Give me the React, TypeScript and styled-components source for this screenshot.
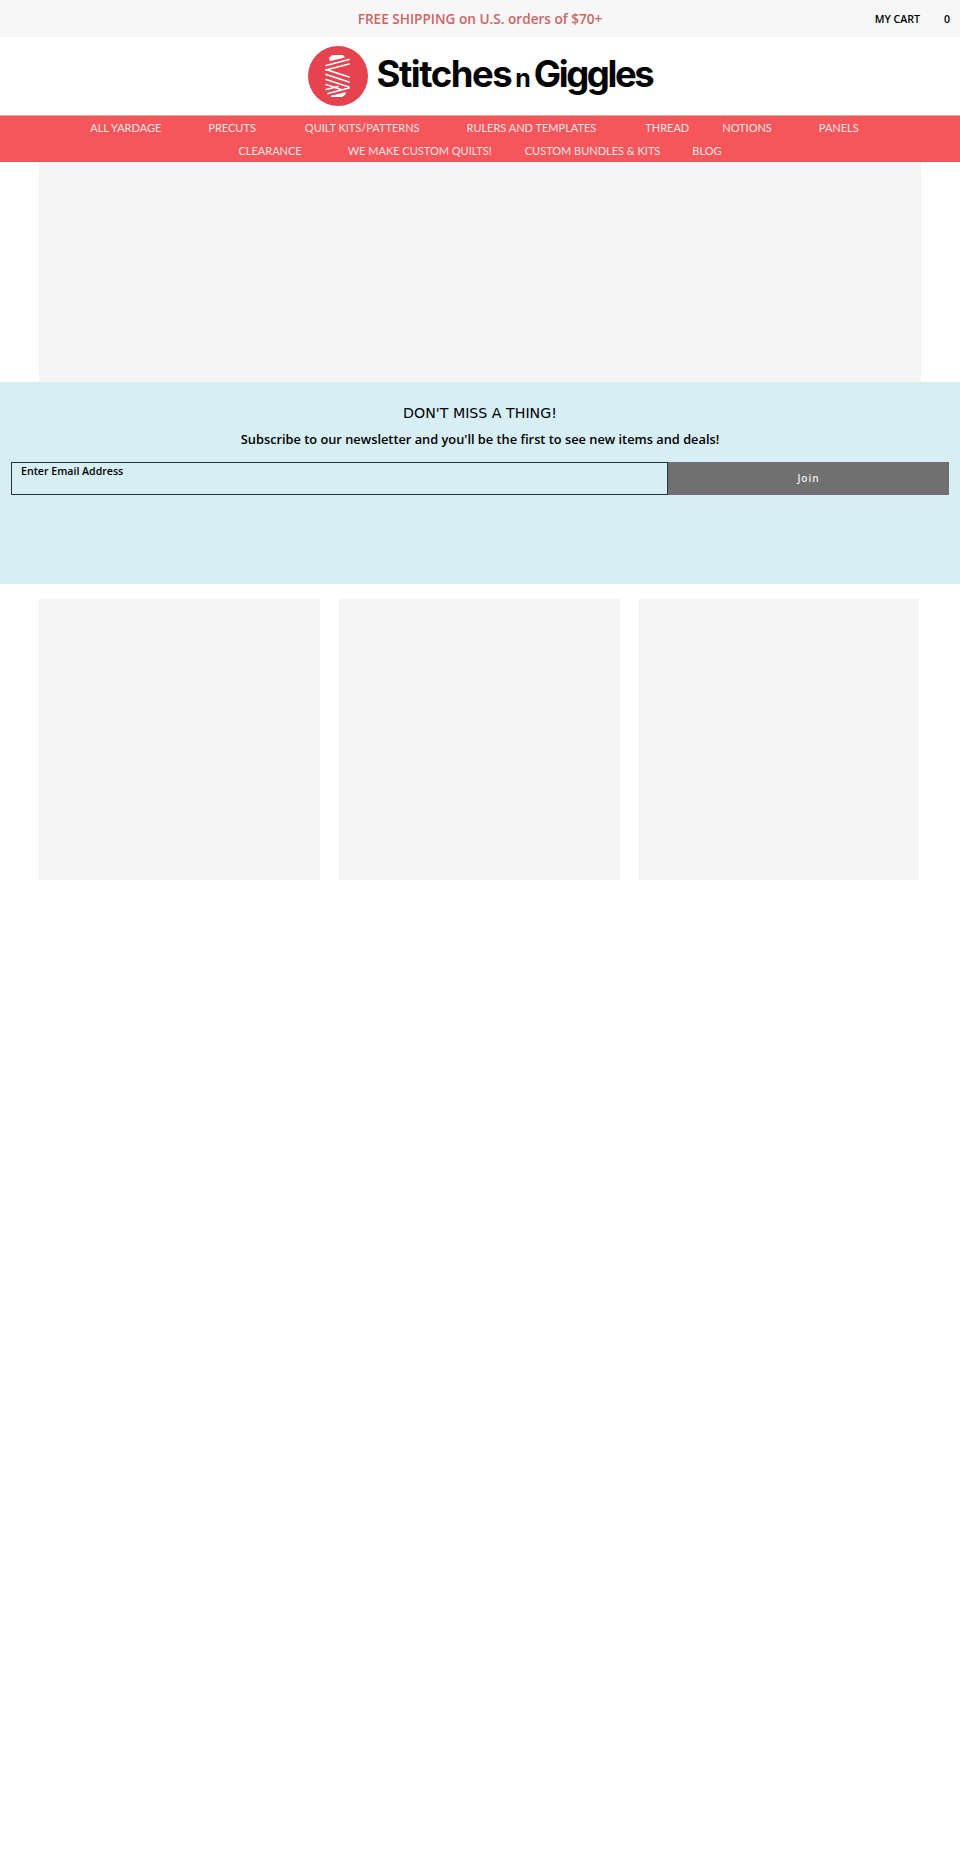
import React from 'react';
import styled, { createGlobalStyle } from 'styled-components';

const GlobalStyle = createGlobalStyle`
    html, body {
        margin: 0;
        padding: 0;
        background: #fff;
    }
    body {
        font-family: 'Open Sans', sans-serif;
        color: #000;
    }
`;

const Page = styled.div`
    min-height: 1875px;
    display: flex;
    flex-direction: column;
`;
const TopBar = styled.div`
    position: relative;
    height: 37px;
    background: #f7f7f7;
    display: flex;
    align-items: center;
    justify-content: center;
`;
const Promo = styled.div`
    font-size: 13.6px;
    font-weight: 600;
    color: #cd6466;
    margin-bottom: 1px;
`;
const Cart = styled.div`
    position: absolute;
    top: 11px;
    right: 10px;
    display: flex;
    gap: 24px;
    font-size: 10.6px;
    font-weight: 600;
    line-height: 17px;
`;
const LogoRow = styled.div`
    height: 78px;
    display: flex;
    align-items: center;
    justify-content: center;
    gap: 9px;
`;
const Wordmark = styled.div`
    display: flex;
    align-items: baseline;
    font-family: Inter, sans-serif;
    font-weight: 700;
    font-size: 36.5px;
    line-height: 50px;
    color: #050505;
`;
const WordPart = styled.span<{ $spacing: number }>`
    letter-spacing: ${(p) => p.$spacing}px;
`;
const WordmarkSmall = styled.span`
    font-size: 25px;
    font-weight: 700;
    margin: 0 3px 0 4px;
`;
const Nav = styled.nav`
    height: 46px;
    background: #f4565b;
    border-top: 1px solid #e9a4a6;
    display: flex;
    flex-direction: column;
`;
const NavRow = styled.div`
    height: 23px;
    display: flex;
    justify-content: center;
    align-items: center;
`;
const NavItem = styled.a<{ $after?: number }>`
    font-family: Lato, sans-serif;
    font-size: 11px;
    color: #fbe3e3;
    white-space: nowrap;
    margin-right: ${(p) => p.$after ?? 0}px;
`;
const Hero = styled.div`
    height: 220px;
    margin: 0 39px;
    background: #f5f5f5;
`;
const Newsletter = styled.section`
    height: 202px;
    box-sizing: border-box;
    padding: 21px 11px 0;
    background: #d7eef5;
    display: flex;
    flex-direction: column;
    align-items: stretch;
`;
const Heading = styled.h2`
    margin: 0;
    font-family: 'DejaVu Sans', sans-serif;
    font-size: 14.2px;
    font-weight: 400;
    line-height: 20px;
    text-align: center;
`;
const Subheading = styled.p`
    margin: 6px 0 0;
    font-size: 12.8px;
    font-weight: 600;
    line-height: 20px;
    text-align: center;
`;
const Form = styled.div`
    margin-top: 13px;
    display: flex;
    height: 33px;
`;
const EmailField = styled.div`
    flex: 0 0 657px;
    box-sizing: border-box;
    border: 1px solid #26343c;
    padding: 0 9px;
    font-size: 10.6px;
    font-weight: 600;
    line-height: 17px;
`;
const JoinButton = styled.button`
    flex: 0 0 281px;
    border: 0;
    background: #707070;
    color: #eee;
    font-family: 'Open Sans', sans-serif;
    font-size: 10px;
    font-weight: 600;
    letter-spacing: 1px;
    padding: 0 0 2px;
`;
const Cards = styled.div`
    margin-top: 15px;
    padding: 0 39px;
    display: grid;
    grid-template-columns: repeat(3, 281px);
    column-gap: 18.5px;
`;
const Card = styled.div`
    height: 281px;
    background: #f5f5f5;
`;

const navRows = [
    [
        { label: 'ALL YARDAGE', after: 47 },
        { label: 'PRECUTS', after: 49 },
        { label: 'QUILT KITS/PATTERNS', after: 47 },
        { label: 'RULERS AND TEMPLATES', after: 49 },
        { label: 'THREAD', after: 33 },
        { label: 'NOTIONS', after: 47 },
        { label: 'PANELS', after: 11 },
    ],
    [
        { label: 'CLEARANCE', after: 46 },
        { label: 'WE MAKE CUSTOM QUILTS!', after: 33 },
        { label: 'CUSTOM BUNDLES & KITS', after: 32 },
        { label: 'BLOG', after: 0 },
    ],
];

const SpoolLogo = () => (
    <svg width="60" height="60" viewBox="0 0 60 60" aria-hidden="true">
        <circle cx="30" cy="30" r="30" fill="#e5434f" />
        <path d="M24 9h11l2 2.5-15 3.5-1-3z" fill="#fff" />
        <path d="M24 51h10l3-2 1-3-16 4z" fill="#fff" />
        <g stroke="#fff" strokeWidth="1.7" fill="none" strokeLinecap="round">
            <path d="M18 19.5l23-6" />
            <path d="M18 24l23-6" />
            <path d="M18 23.5l23 7.5" />
            <path d="M18 28.5l23 7.5" />
            <path d="M18 33.5l23 7.5" />
            <path d="M18 38.5l15 5" />
            <path d="M18 43.5l12-3" />
            <path d="M20 47.5l21-5.5" />
        </g>
    </svg>
);

export default function App() {
    return (
        <Page>
            <GlobalStyle />
            <TopBar>
                <Promo>FREE SHIPPING on U.S. orders of $70+</Promo>
                <Cart>
                    <span>MY CART</span>
                    <span>0</span>
                </Cart>
            </TopBar>
            <LogoRow>
                <SpoolLogo />
                <Wordmark>
                    <WordPart $spacing={-1.5}>Stitches</WordPart>
                    <WordmarkSmall>n</WordmarkSmall>
                    <WordPart $spacing={-2.4}>Giggles</WordPart>
                </Wordmark>
            </LogoRow>
            <Nav>
                {navRows.map((row, i) => (
                    <NavRow key={i}>
                        {row.map((item) => (
                            <NavItem key={item.label} $after={item.after}>
                                {item.label}
                            </NavItem>
                        ))}
                    </NavRow>
                ))}
            </Nav>
            <Hero />
            <Newsletter>
                <Heading>DON'T MISS A THING!</Heading>
                <Subheading>Subscribe to our newsletter and you'll be the first to see new items and deals!</Subheading>
                <Form>
                    <EmailField>Enter Email Address</EmailField>
                    <JoinButton>Join</JoinButton>
                </Form>
            </Newsletter>
            <Cards>
                <Card />
                <Card />
                <Card />
            </Cards>
        </Page>
    );
}
